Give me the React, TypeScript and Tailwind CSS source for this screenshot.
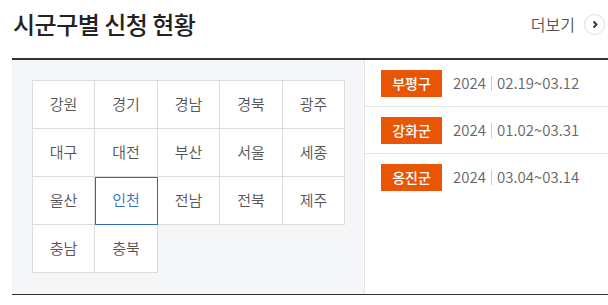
const regions = [
  "강원", "경기", "경남", "경북", "광주",
  "대구", "대전", "부산", "서울", "세종",
  "울산", "인천", "전남", "전북", "제주",
  "충남", "충북",
];

const schedules = [
  { name: "부평구", year: "2024", period: "02.19~03.12" },
  { name: "강화군", year: "2024", period: "01.02~03.31" },
  { name: "옹진군", year: "2024", period: "03.04~03.14" },
];

const App = () => {
  return (
    <div className="w-[608px] h-[305px] bg-white font-['Noto_Sans_CJK_KR',sans-serif] overflow-hidden">
      <div className="h-[48px] flex items-center justify-between pl-[13px] pr-[3px] mb-[10px]">
        <h2 className="text-[24px] font-medium text-[#222] tracking-[-0.5px]">
          시군구별 신청 현황
        </h2>
        <button type="button" className="flex items-center gap-[9px] text-[16px] font-[350] text-[#555]">
          더보기
          <span className="w-[21px] h-[21px] rounded-full border border-[#ddd] flex items-center justify-center">
            <svg width="8" height="9" viewBox="0 0 8 9" fill="none">
              <path d="M2.5 1.5 L5.5 4.5 L2.5 7.5" stroke="#2b3a55" strokeWidth="2" />
            </svg>
          </span>
        </button>
      </div>
      <div className="ml-[12px] flex border-t-2 border-b border-[#333] h-[237px]">
        <div className="w-[353px] bg-[#f5f6f8] border-r border-[#e2e4e8] pt-[20px] pl-[20px]">
          <div className="grid grid-cols-[62px_63px_62px_63px_62px] w-fit border-t border-l border-[#ddd]">
            {regions.map((r) => {
              const on = r === "인천";
              return (
                <div
                  key={r}
                  className={
                    on
                      ? "h-[48px] bg-white border-r border-b border-[#ddd] outline outline-1 -outline-offset-1 outline-[#2f6cb4] flex items-center justify-center text-[15px] font-[350] text-[#3a6fb8]"
                      : "h-[48px] bg-white border-r border-b border-[#ddd] flex items-center justify-center text-[15px] font-[350] text-[#555]"
                  }
                >
                  {r}
                </div>
              );
            })}
          </div>
        </div>
        <ul className="flex-1">
          {schedules.map((s, i) => (
            <li
              key={s.name}
              className={
                i < schedules.length - 1
                  ? "h-[47px] flex items-center pl-[16px] border-b border-[#e6e6e6]"
                  : "h-[47px] flex items-center pl-[16px]"
              }
            >
              <span className="w-[61px] h-[27px] bg-[#e85504] text-white text-[14px] font-medium flex items-center justify-center">
                {s.name}
              </span>
              <span className="ml-[11px] text-[15px] font-[350] text-[#666]">{s.year}</span>
              <span className="mx-[5px] w-px h-[15px] bg-[#ccc]" />
              <span className="text-[15px] font-[350] text-[#666]">{s.period}</span>
            </li>
          ))}
        </ul>
      </div>
    </div>
  );
};

export default App;
